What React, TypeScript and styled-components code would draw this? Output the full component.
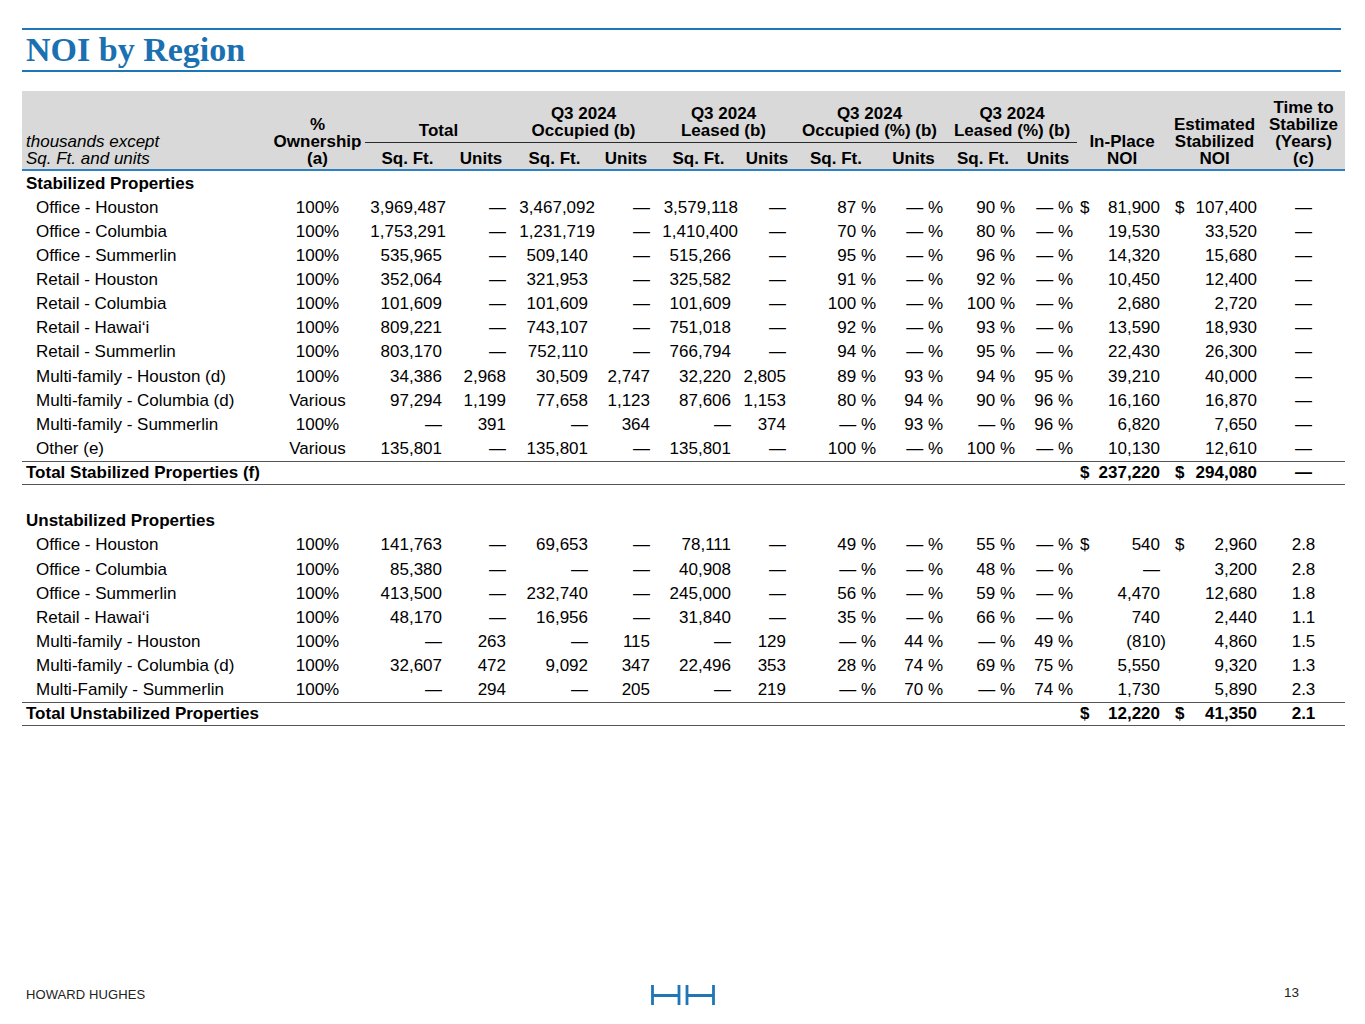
import styled, { createGlobalStyle } from "styled-components";

const COLS = [248, 95, 85, 62, 85, 58, 87, 50, 88, 67, 72, 58, 90, 95, 83];
const TEMPLATE = COLS.map((c) => `${c}px`).join(" ");

// right padding per numeric column; "wide" is used by numbers with two commas
const PADS: Record<number, { pad: number; wide?: number }> = {
  2: { pad: 8, wide: 4 },
  3: { pad: 6 },
  4: { pad: 9, wide: 2 },
  5: { pad: 5 },
  6: { pad: 11, wide: 4 },
  7: { pad: 6 },
  8: { pad: 4 },
  9: { pad: 4 },
  10: { pad: 4 },
  11: { pad: 4 },
};

type Row = {
  cells: string[];
  dollar?: boolean;
};

const D = "—";

const stabilized: Row[] = [
  { dollar: true, cells: ["Office - Houston", "100%", "3,969,487", D, "3,467,092", D, "3,579,118", D, "87 %", "— %", "90 %", "— %", "81,900", "107,400", D] },
  { cells: ["Office - Columbia", "100%", "1,753,291", D, "1,231,719", D, "1,410,400", D, "70 %", "— %", "80 %", "— %", "19,530", "33,520", D] },
  { cells: ["Office - Summerlin", "100%", "535,965", D, "509,140", D, "515,266", D, "95 %", "— %", "96 %", "— %", "14,320", "15,680", D] },
  { cells: ["Retail - Houston", "100%", "352,064", D, "321,953", D, "325,582", D, "91 %", "— %", "92 %", "— %", "10,450", "12,400", D] },
  { cells: ["Retail - Columbia", "100%", "101,609", D, "101,609", D, "101,609", D, "100 %", "— %", "100 %", "— %", "2,680", "2,720", D] },
  { cells: ["Retail - Hawaiʻi", "100%", "809,221", D, "743,107", D, "751,018", D, "92 %", "— %", "93 %", "— %", "13,590", "18,930", D] },
  { cells: ["Retail - Summerlin", "100%", "803,170", D, "752,110", D, "766,794", D, "94 %", "— %", "95 %", "— %", "22,430", "26,300", D] },
  { cells: ["Multi-family - Houston (d)", "100%", "34,386", "2,968", "30,509", "2,747", "32,220", "2,805", "89 %", "93 %", "94 %", "95 %", "39,210", "40,000", D] },
  { cells: ["Multi-family - Columbia (d)", "Various", "97,294", "1,199", "77,658", "1,123", "87,606", "1,153", "80 %", "94 %", "90 %", "96 %", "16,160", "16,870", D] },
  { cells: ["Multi-family - Summerlin", "100%", D, "391", D, "364", D, "374", "— %", "93 %", "— %", "96 %", "6,820", "7,650", D] },
  { cells: ["Other (e)", "Various", "135,801", D, "135,801", D, "135,801", D, "100 %", "— %", "100 %", "— %", "10,130", "12,610", D] },
];

const unstabilized: Row[] = [
  { dollar: true, cells: ["Office - Houston", "100%", "141,763", D, "69,653", D, "78,111", D, "49 %", "— %", "55 %", "— %", "540", "2,960", "2.8"] },
  { cells: ["Office - Columbia", "100%", "85,380", D, D, D, "40,908", D, "— %", "— %", "48 %", "— %", D, "3,200", "2.8"] },
  { cells: ["Office - Summerlin", "100%", "413,500", D, "232,740", D, "245,000", D, "56 %", "— %", "59 %", "— %", "4,470", "12,680", "1.8"] },
  { cells: ["Retail - Hawaiʻi", "100%", "48,170", D, "16,956", D, "31,840", D, "35 %", "— %", "66 %", "— %", "740", "2,440", "1.1"] },
  { cells: ["Multi-family - Houston", "100%", D, "263", D, "115", D, "129", "— %", "44 %", "— %", "49 %", "(810)", "4,860", "1.5"] },
  { cells: ["Multi-family - Columbia (d)", "100%", "32,607", "472", "9,092", "347", "22,496", "353", "28 %", "74 %", "69 %", "75 %", "5,550", "9,320", "1.3"] },
  { cells: ["Multi-Family - Summerlin", "100%", D, "294", D, "205", D, "219", "— %", "70 %", "— %", "74 %", "1,730", "5,890", "2.3"] },
];

const groups = [
  { col: "3 / span 2", lines: ["", "Total"] },
  { col: "5 / span 2", lines: ["Q3 2024", "Occupied (b)"] },
  { col: "7 / span 2", lines: ["Q3 2024", "Leased (b)"] },
  { col: "9 / span 2", lines: ["Q3 2024", "Occupied (%) (b)"] },
  { col: "11 / span 2", lines: ["Q3 2024", "Leased (%) (b)"] },
];

function LogoMark() {
  return (
    <svg width="67" height="22" viewBox="0 0 67 22" fill="none">
      <g stroke="#1f76b7" strokeWidth="2.8">
        <path d="M2.5 1v20M29 1v20M2.5 11.5H29" />
        <path d="M37 1v20M63.5 1v20M37 11.5h26.5" />
      </g>
    </svg>
  );
}

function Money({ value, dollar, bold, lead }: { value: string; dollar?: boolean; bold?: boolean; lead: number }) {
  const neg = value.startsWith("(");
  return (
    <MoneyCell $lead={lead} $pad={neg ? 1 : lead === 3 ? 7 : 5} $bold={bold}>
      <span>{dollar ? "$" : ""}</span>
      <span>{value}</span>
    </MoneyCell>
  );
}

function DataRow({ row }: { row: Row }) {
  const c = row.cells;
  return (
    <BodyRow>
      <LabelCell $indent={14}>{c[0]}</LabelCell>
      <MidCell>{c[1]}</MidCell>
      {c.slice(2, 12).map((v, i) => {
        const spec = PADS[i + 2];
        const wide = (v.match(/,/g) || []).length >= 2;
        return (
          <NumCell key={i} $pad={wide && spec.wide !== undefined ? spec.wide : spec.pad}>
            {v}
          </NumCell>
        );
      })}
      <Money value={c[12]} dollar={row.dollar} lead={3} />
      <Money value={c[13]} dollar={row.dollar} lead={8} />
      <MidCell>{c[14]}</MidCell>
    </BodyRow>
  );
}

function TotalRow({ label, noi, est, years }: { label: string; noi: string; est: string; years: string }) {
  return (
    <BodyRow $total>
      <LabelCell $indent={4}>{label}</LabelCell>
      <Gap />
      <Money value={noi} dollar bold lead={3} />
      <Money value={est} dollar bold lead={8} />
      <MidCell>{years}</MidCell>
    </BodyRow>
  );
}

export default function App() {
  return (
    <>
      <GlobalStyle />
      <Page>
        <TitleBar>
          <Title>NOI by Region</Title>
        </TitleBar>

        <Table>
          <Header>
            <HeadCell $col="1" $row="1 / span 2" $align="left" $italic>
              thousands except
              <br />
              Sq. Ft. and units
            </HeadCell>
            <HeadCell $col="2" $row="1 / span 2">
              %
              <br />
              Ownership
              <br />
              (a)
            </HeadCell>
            {groups.map((g) => (
              <HeadCell key={g.col} $col={g.col} $row="1" $rule>
                {g.lines[0] && (
                  <>
                    {g.lines[0]}
                    <br />
                  </>
                )}
                {g.lines[1]}
              </HeadCell>
            ))}
            {[3, 5, 7, 9, 11].flatMap((n) => [
              <HeadCell key={`s${n}`} $col={`${n}`} $row="2">
                Sq. Ft.
              </HeadCell>,
              <HeadCell key={`u${n}`} $col={`${n + 1}`} $row="2">
                Units
              </HeadCell>,
            ])}
            <HeadCell $col="13" $row="1 / span 2">
              In-Place
              <br />
              NOI
            </HeadCell>
            <HeadCell $col="14" $row="1 / span 2">
              Estimated
              <br />
              Stabilized
              <br />
              NOI
            </HeadCell>
            <HeadCell $col="15" $row="1 / span 2">
              Time to
              <br />
              Stabilize
              <br />
              (Years)
              <br />
              (c)
            </HeadCell>
          </Header>

          <Body>
            <BodyRow>
              <LabelCell $indent={4} $bold>
                Stabilized Properties
              </LabelCell>
            </BodyRow>
            {stabilized.map((r, i) => (
              <DataRow key={`a${i}`} row={r} />
            ))}
            <TotalRow label="Total Stabilized Properties (f)" noi="237,220" est="294,080" years={D} />
            <BodyRow />
            <BodyRow>
              <LabelCell $indent={4} $bold>
                Unstabilized Properties
              </LabelCell>
            </BodyRow>
            {unstabilized.map((r, i) => (
              <DataRow key={`b${i}`} row={r} />
            ))}
            <TotalRow label="Total Unstabilized Properties" noi="12,220" est="41,350" years="2.1" />
          </Body>
        </Table>

        <Footer>
          <Brand>HOWARD HUGHES</Brand>
          <LogoMark />
          <PageNo>13</PageNo>
        </Footer>
      </Page>
    </>
  );
}

const GlobalStyle = createGlobalStyle`
  body {
    margin: 0;
    background: #fff;
    color: #000;
    font-family: "Liberation Sans", Arial, sans-serif;
  }
`;

const Page = styled.div`
  width: 1365px;
  height: 1024px;
  box-sizing: border-box;
  padding: 28px 20px 18px 22px;
  display: flex;
  flex-direction: column;
`;

const TitleBar = styled.div`
  width: 1319px;
  border-top: 2px solid #1f76b7;
  border-bottom: 2px solid #1f76b7;
`;

const Title = styled.h1`
  margin: 0;
  padding-left: 4px;
  font-family: "Liberation Serif", "Times New Roman", serif;
  font-weight: 700;
  font-size: 34px;
  line-height: 40px;
  color: #1a70b0;
`;

const Table = styled.div`
  margin-top: 19px;
  width: 1323px;
  font-size: 17px;
`;

const Header = styled.div`
  display: grid;
  grid-template-columns: ${TEMPLATE};
  grid-template-rows: 52px 25.5px;
  background: #d9d9d9;
  border-bottom: 2px solid #2d80c2;
`;

const HeadCell = styled.div<{ $col: string; $row: string; $align?: string; $italic?: boolean; $rule?: boolean }>`
  grid-column: ${(p) => p.$col};
  grid-row: ${(p) => p.$row};
  align-self: end;
  text-align: ${(p) => p.$align ?? "center"};
  font-weight: ${(p) => (p.$italic ? 400 : 700)};
  font-style: ${(p) => (p.$italic ? "italic" : "normal")};
  line-height: 17px;
  white-space: nowrap;
  padding-left: ${(p) => (p.$italic ? "4px" : "0")};
  padding-bottom: ${(p) => (p.$rule ? "3px" : "2px")};
  border-bottom: ${(p) => (p.$rule ? "1px solid #2a2a2a" : "none")};
`;

const Body = styled.div`
  padding-top: 1px;
`;

const BodyRow = styled.div<{ $total?: boolean }>`
  display: grid;
  grid-template-columns: ${TEMPLATE};
  height: 24.14px;
  box-sizing: border-box;
  align-items: center;
  line-height: 20px;
  font-weight: ${(p) => (p.$total ? 700 : 400)};
  border-top: ${(p) => (p.$total ? "1px solid #555" : "none")};
  border-bottom: ${(p) => (p.$total ? "1px solid #555" : "none")};
`;

const LabelCell = styled.div<{ $indent: number; $bold?: boolean }>`
  padding-left: ${(p) => p.$indent}px;
  font-weight: ${(p) => (p.$bold ? 700 : "inherit")};
  white-space: nowrap;
`;

const MidCell = styled.div`
  text-align: center;
  white-space: nowrap;
`;

const NumCell = styled.div<{ $pad: number }>`
  text-align: right;
  padding-right: ${(p) => p.$pad}px;
  white-space: nowrap;
`;

const Gap = styled.div`
  grid-column: 2 / span 11;
`;

const MoneyCell = styled.div<{ $lead: number; $pad: number; $bold?: boolean }>`
  display: flex;
  justify-content: space-between;
  padding-left: ${(p) => p.$lead}px;
  padding-right: ${(p) => p.$pad}px;
  font-weight: ${(p) => (p.$bold ? 700 : "inherit")};
  white-space: nowrap;
`;

const Footer = styled.div`
  margin-top: auto;
  display: grid;
  grid-template-columns: 1fr auto 1fr;
  align-items: center;
  width: 1323px;
  height: 22px;
`;

const Brand = styled.div`
  padding-left: 4px;
  padding-bottom: 2px;
  font-size: 13px;
  color: #222;
  letter-spacing: 0.1px;
`;

const PageNo = styled.div`
  text-align: right;
  padding-right: 46px;
  padding-bottom: 6px;
  font-size: 13.5px;
  color: #222;
`;
